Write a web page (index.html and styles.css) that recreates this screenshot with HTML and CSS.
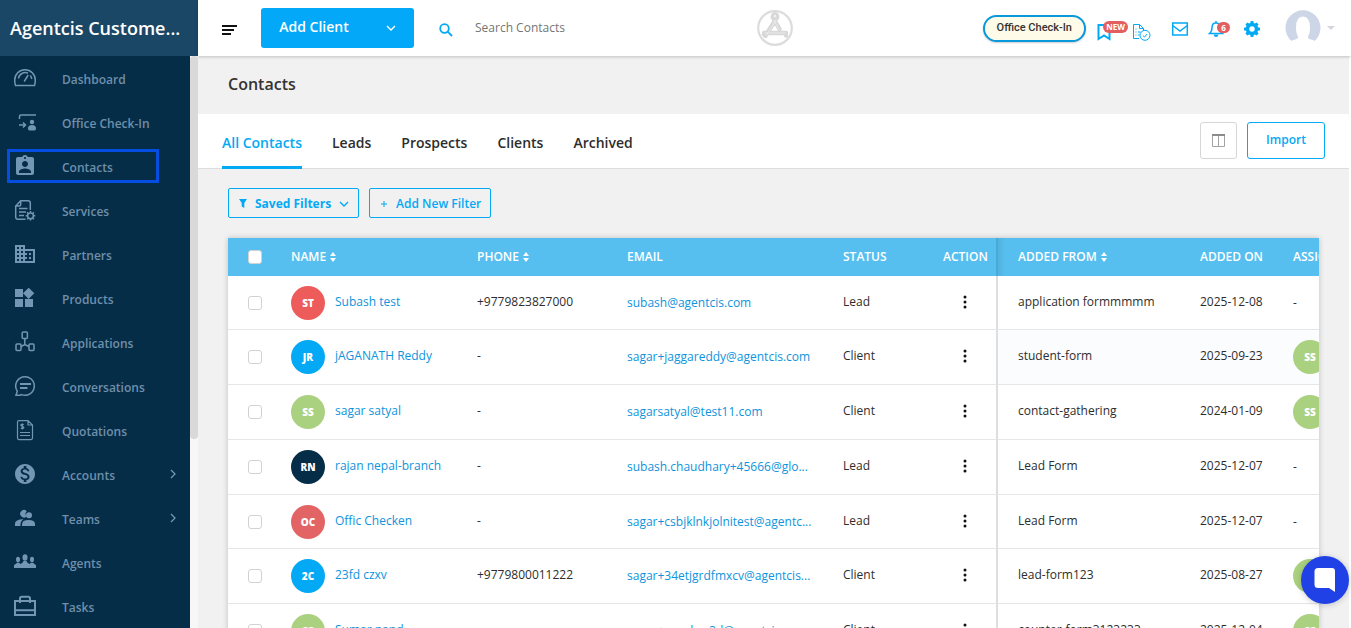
FILE: index.html
```html
<!DOCTYPE html>
<html lang="en">
<head>
<meta charset="utf-8">
<meta name="viewport" content="width=device-width, initial-scale=1">
<title>Contacts</title>
<link rel="stylesheet" href="styles.css">
</head>
<body>
<div class="app">
  <aside class="sidebar">
    <div class="brand">Agentcis Custome...</div>
    <div class="sidebar-body">
      <nav class="nav">
        <a class="nav-link" href="#"><svg class="nav-icon" viewBox="0 0 24 24"><g class="line"><path d="M2.500 19.500Q1.700 17 1.700 14a10.300 10.300 0 0 1 20.600 0q0 3-.8 5.500z"/><path d="M5.500 12.500a6.800 6.800 0 0 1 9.500-5.300M18.700 13a6.500 6.500 0 0 0-1.400-3.600"/><path d="M11.200 15.500l4-6.500"/></g></svg>Dashboard</a>
        <a class="nav-link" href="#"><svg class="nav-icon" viewBox="0 0 24 24"><g class="line"><path d="M6.500 9V6.500q0-1.500 1.500-1.500H23M6 15h6.500M10 12.500l2.500 2.500-2.500 2.500"/></g><circle cx="19" cy="12" r="2.200"/><path d="M15 18.500q0-3.500 4-3.500t4 3.500q0 2-1.500 2h-5q-1.500 0-1.500-2z"/></svg>Office Check-In</a>
        <a class="nav-link current" href="#" aria-current="page"><svg class="nav-icon" viewBox="0 0 24 24"><path d="M19 3h-4.180C14.400 1.840 13.300 1 12 1c-1.300 0-2.400.84-2.820 2H5c-1.100 0-2 .9-2 2v14c0 1.100.9 2 2 2h14c1.100 0 2-.9 2-2V5c0-1.100-.9-2-2-2zm-7 0c.55 0 1 .45 1 1s-.45 1-1 1-1-.45-1-1 .45-1 1-1zm0 4c1.660 0 3 1.340 3 3s-1.340 3-3 3-3-1.340-3-3 1.340-3 3-3zm6 12H6v-1.400c0-2 4-3.100 6-3.100s6 1.100 6 3.100V19z"/></svg>Contacts</a>
        <a class="nav-link" href="#"><svg class="nav-icon" viewBox="0 0 24 24"><g class="line"><path d="M12.500 21.300H5q-2.300 0-2.300-2.300V8l5-5.200H15q2.300 0 2.300 2.300v7M2.700 8h3.500q1.500 0 1.500-1.500V2.800M6 10.500h8.500M6 14h7M6 17.500h5"/><circle cx="17.500" cy="17.800" r="2.900"/></g><path class="teeth" d="M17.500 13v1.500M17.500 21v1.600M12.700 17.800h1.500M20.800 17.800h1.500M14.100 14.400l1 1M19.900 20.200l1 1M14.100 21.200l1-1M19.900 15.400l1-1"/></svg>Services</a>
        <a class="nav-link" href="#"><svg class="nav-icon" viewBox="0 0 24 24"><path d="M12 7V3H2v18h20V7H12zM6 19H4v-2h2v2zm0-4H4v-2h2v2zm0-4H4V9h2v2zm0-4H4V5h2v2zm4 12H8v-2h2v2zm0-4H8v-2h2v2zm0-4H8V9h2v2zm0-4H8V5h2v2zm10 12h-8v-2h2v-2h-2v-2h2v-2h-2V9h8v10zm-2-8h-2v2h2v-2zm0 4h-2v2h2v-2z"/></svg>Partners</a>
        <a class="nav-link" href="#"><svg class="nav-icon" viewBox="0 0 24 24"><path d="M12 13h8v8h-8zM2 13h8v8H2zM2 3h8v8H2zM15.660 1.690L10 7.340 15.660 13l5.660-5.660z"/></svg>Products</a>
        <a class="nav-link" href="#"><svg class="nav-icon" viewBox="0 0 24 24"><g class="line"><rect x="9.200" y="2" width="5.200" height="6.500" rx="1"/><rect x="3" y="14" width="5" height="6.500" rx="1"/><rect x="16" y="14" width="5" height="6.500" rx="1"/><path d="M11.800 8.500v5.500M8 16.500l3.800-2 4.200 2"/></g></svg>Applications</a>
        <a class="nav-link" href="#"><svg class="nav-icon" viewBox="0 0 24 24"><path class="line" d="M3 21.200l1.300-4A9.300 9.300 0 1 1 8.500 20.600L7 21.200z"/><path class="bold" d="M7 10h11M7 14h7.500"/></svg>Conversations</a>
        <a class="nav-link" href="#"><svg class="nav-icon" viewBox="0 0 24 24"><g class="thin"><path d="M15 2.600H6q-1.500 0-1.500 1.500v16q0 1.500 1.500 1.500h12q1.500 0 1.500-1.500V7zM15 2.600V7h4.500M7 14.500h10M7 17.500h10"/><path d="M10.800 6.500q-3-.8-3 .6c0 1.500 3 .9 3 2.400q0 1.400-3 .6M9.300 5.500v6"/></g></svg>Quotations</a>
        <a class="nav-link" href="#"><svg class="nav-icon" viewBox="0 0 24 24"><path d="M12 2C6.480 2 2 6.480 2 12s4.480 10 10 10 10-4.480 10-10S17.520 2 12 2zm1.410 16.090V20h-2.670v-1.930c-1.710-.36-3.160-1.460-3.270-3.400h1.960c.1 1.050.82 1.870 2.650 1.870 1.960 0 2.400-.98 2.400-1.590 0-.83-.44-1.610-2.670-2.140-2.480-.6-4.180-1.620-4.180-3.670 0-1.720 1.390-2.840 3.110-3.210V4h2.670v1.950c1.860.45 2.790 1.860 2.850 3.390H14.300c-.05-1.110-.64-1.870-2.220-1.870-1.500 0-2.400.68-2.400 1.640 0 .84.65 1.390 2.670 1.910s4.180 1.390 4.180 3.910c-.01 1.830-1.380 2.830-3.120 3.160z"/></svg>Accounts<svg class="nav-arrow" viewBox="0 0 6 10"><path d="M1 1l4 4-4 4"/></svg></a>
        <a class="nav-link" href="#"><svg class="nav-icon" viewBox="0 0 24 24"><path d="M13.500 10.500a3.700 3.700 0 1 1 .2-5.200 4 4 0 0 0-.2 5.200zM2 20v-2.500q0-4 8.500-4.200-3.500 2.200-3 6.700z"/><circle cx="16" cy="9.300" r="3"/><path d="M9 20v-1.700q0-4.300 6.500-4.300 6.500 0 6.500 4V20z"/></svg>Teams<svg class="nav-arrow" viewBox="0 0 6 10"><path d="M1 1l4 4-4 4"/></svg></a>
        <a class="nav-link" href="#"><svg class="nav-icon" viewBox="0 0 24 24"><ellipse cx="12" cy="7.500" rx="2.500" ry="3.300"/><ellipse cx="5" cy="9.500" rx="2" ry="2.800"/><ellipse cx="19" cy="9.500" rx="2" ry="2.800"/><path d="M1 18v-3q2.500-1.200 3-2.200h2l1.500 1.200q2.500-1 3-3h3q.5 2 3 3l1.500-1.200h2q.5 1 3 2.200v3z"/></svg>Agents</a>
        <a class="nav-link" href="#"><svg class="nav-icon" viewBox="0 0 24 24"><path class="bold" d="M2 7h20v14H2zM2 16.200h20M7 9V4.500Q7 2.800 8.800 2.800h6.400Q17 2.800 17 4.500V9"/></svg>Tasks</a>
      </nav>
      <div class="track"><div class="thumb"></div></div>
    </div>
  </aside>

  <div class="main">
    <header class="topbar">
      <div class="top-left">
        <button class="icon-button" aria-label="Toggle menu"><svg class="menu-icon" viewBox="0 0 15 12"><path d="M0 2h15M0 6h12M0 10h9"/></svg></button>
        <div class="split">
          <button class="split-main">Add Client</button>
          <button class="split-more" aria-label="More options"><svg class="chevron" viewBox="0 0 10 6"><path d="M1 1l4 4 4-4"/></svg></button>
        </div>
        <label class="search"><svg class="search-icon" viewBox="0 0 14 14"><circle cx="5.500" cy="5.500" r="4.300"/><path d="M8.700 8.700l4.300 4.300"/></svg><input type="text" placeholder="Search Contacts" aria-label="Search Contacts"></label>
      </div>
      <svg class="logo" viewBox="0 0 36 36"><circle cx="18" cy="18" r="16.800" fill="none" stroke="#dcdcdc" stroke-width="2.200"/><g fill="none" stroke="#d8d8d8" stroke-width="4.400" stroke-linecap="round" stroke-linejoin="round"><path d="M7 23h22M19.500 8.500L8.500 25.500M16.500 8.500l6 10.500M18 6.500v.5M28.500 23.500l.5 2M7 24.500l1.500 1.500"/></g><circle cx="18" cy="6.500" r="4.400" fill="#d8d8d8"/><circle cx="18" cy="6" r="1.200" fill="#f4f4f4"/><g fill="none" stroke="#efefef" stroke-width=".8"><path d="M8 23h20.500M19.500 9.500l-10 15.500M16.800 10l5.200 9.500"/></g></svg>
      <div class="top-right">
        <button class="checkin">Office Check-In</button>
        <button class="icon-button bookmark" aria-label="What's new"><svg width="14" height="18" viewBox="0 0 14 18"><path class="accent" d="M1.500 2h11v14L7 12.500 1.500 16z" stroke-width="2"/></svg><span class="badge badge-new">NEW</span></button>
        <button class="icon-button report" aria-label="Tasks due"><svg width="20" height="18" viewBox="0 0 20 18"><g class="accent"><path d="M7 15.500H1.500V1.500h6l4 4V8M7.500 1.500v4h4M3.500 6h1M3.500 9h1M3.500 12h1M6 9h2.500M6 12h1.500"/><circle cx="13" cy="12.300" r="5"/><path d="M10.800 12.500l1.700 1.500 2.600-3"/></g></svg></button>
        <button class="icon-button mail" aria-label="Mail"><svg width="18" height="14" viewBox="0 0 18 14"><path class="accent" d="M1.700 1h14.600v12H1.700zM1.700 3.500L9 9l7.300-5.500" stroke-width="1.500"/></svg></button>
        <button class="icon-button bell" aria-label="Notifications"><svg width="16" height="18" viewBox="0 0 16 18"><path class="accent" d="M1.500 13.500q2.500-2 2.500-6 0-4.500 4-4.500t4 4.500q0 4 2.500 6zM8 1v2" stroke-width="1.500"/><path class="accent-fill" d="M5.500 14.500h5q-.5 2.500-2.500 2.500t-2.500-2.500z"/></svg><span class="badge badge-count">6</span></button>
        <button class="icon-button gear" aria-label="Settings"><svg width="16" height="16" viewBox="0 0 16 16"><path class="accent-fill" fill-rule="evenodd" d="M6.700 0h2.600l.4 2 1.200.5L12.600 1.400l2 2-1.100 1.700.5 1.200 2 .4v2.600l-2 .4-.5 1.200 1.100 1.700-2 2-1.700-1.100-1.200.5-.4 2H6.700l-.4-2-1.200-.5-1.700 1.100-2-2 1.100-1.700L2 9.700l-2-.4V6.700l2-.4.5-1.200L1.400 3.400l2-2 1.700 1.100L6.300 2zM8 5.300a2.700 2.700 0 1 0 0 5.400 2.700 2.700 0 0 0 0-5.400z"/></svg></button>
        <button class="icon-button profile" aria-label="Profile"><svg width="36" height="36" viewBox="0 0 36 36"><path fill="#cdd6e7" d="M6.500 31A17.500 17.500 0 1 1 29.500 31q-1-1-4.500-1.800-3-.7-1.500-3.700 1.500-2.500 1.500-8 0-11-7-11t-7 11q0 5.500 1.500 8 1.500 3-1.500 3.700Q7.500 30 6.500 31z"/></svg><svg width="8" height="4" viewBox="0 0 8 4"><path fill="#d3d6dc" d="M0 0h8L4 4z"/></svg></button>
      </div>
    </header>

    <main class="content">
      <div class="page-title"><h1>Contacts</h1></div>
      <div class="tabbar">
        <nav class="tabs">
          <a class="tab selected" href="#">All Contacts</a>
          <a class="tab" href="#">Leads</a>
          <a class="tab" href="#">Prospects</a>
          <a class="tab" href="#">Clients</a>
          <a class="tab" href="#">Archived</a>
        </nav>
        <div class="tab-actions">
          <button class="columns" aria-label="Choose columns"><svg width="13" height="13" viewBox="0 0 13 13"><path d="M.5 1v11.500h12V1M6.500 1v11.500" fill="none" stroke="#a3a3a3"/><path d="M0 1h13" stroke="#8c8c8c" stroke-width="2"/></svg></button>
          <button class="import">Import</button>
        </div>
      </div>
      <div class="filters">
        <button class="filter strong"><svg width="8" height="9" viewBox="0 0 8 9"><path fill="currentColor" d="M0 0h8L5.300 4v5L2.700 7.500V4z"/></svg>Saved Filters<svg class="chevron" viewBox="0 0 10 6"><path d="M1 1l4 4 4-4"/></svg></button>
        <button class="filter"><svg width="8" height="8" viewBox="0 0 8 8"><path d="M4 1v6M1 4h6" stroke="currentColor" fill="none"/></svg>Add New Filter</button>
      </div>

      <div class="table-card">
        <table>
          <colgroup><col class="c-check"><col class="c-name"><col class="c-phone"><col class="c-email"><col class="c-status"><col class="c-action"><col class="c-from"><col class="c-on"><col class="c-assignee"></colgroup>
          <thead>
            <tr>
              <th><input type="checkbox" aria-label="Select all"></th>
              <th>NAME <svg class="sort" viewBox="0 0 6 10"><path d="M0 4l3-4 3 4zM0 6h6l-3 4z"/></svg></th>
              <th>PHONE <svg class="sort" viewBox="0 0 6 10"><path d="M0 4l3-4 3 4zM0 6h6l-3 4z"/></svg></th>
              <th>EMAIL</th><th>STATUS</th><th class="action">ACTION</th>
              <th class="from">ADDED FROM <svg class="sort" viewBox="0 0 6 10"><path d="M0 4l3-4 3 4zM0 6h6l-3 4z"/></svg></th>
              <th class="on">ADDED ON</th><th class="assignee">ASSIGNEE</th>
            </tr>
          </thead>
          <tbody>
            <tr>
              <td><input type="checkbox" aria-label="Select Subash test"></td>
              <td><div class="person"><span class="avatar red">ST</span><a href="#">Subash test</a></div></td>
              <td>+9779823827000</td><td><a class="email" href="#">subash@agentcis.com</a></td><td>Lead</td>
              <td class="action"><button class="dots" aria-label="Actions"><svg viewBox="0 0 4 14"><circle cx="2" cy="2" r="1.500"/><circle cx="2" cy="7" r="1.500"/><circle cx="2" cy="12" r="1.500"/></svg></button></td>
              <td class="from">application formmmmm</td><td class="on">2025-12-08</td><td class="assignee">-</td>
            </tr>
            <tr class="tinted">
              <td><input type="checkbox" aria-label="Select jAGANATH Reddy"></td>
              <td><div class="person"><span class="avatar blue">JR</span><a href="#">jAGANATH Reddy</a></div></td>
              <td>-</td><td><a class="email" href="#">sagar+jaggareddy@agentcis.com</a></td><td>Client</td>
              <td class="action"><button class="dots" aria-label="Actions"><svg viewBox="0 0 4 14"><circle cx="2" cy="2" r="1.500"/><circle cx="2" cy="7" r="1.500"/><circle cx="2" cy="12" r="1.500"/></svg></button></td>
              <td class="from">student-form</td><td class="on">2025-09-23</td><td class="assignee"><span class="avatar green">SS</span></td>
            </tr>
            <tr>
              <td><input type="checkbox" aria-label="Select sagar satyal"></td>
              <td><div class="person"><span class="avatar green">SS</span><a href="#">sagar satyal</a></div></td>
              <td>-</td><td><a class="email" href="#">sagarsatyal@test11.com</a></td><td>Client</td>
              <td class="action"><button class="dots" aria-label="Actions"><svg viewBox="0 0 4 14"><circle cx="2" cy="2" r="1.500"/><circle cx="2" cy="7" r="1.500"/><circle cx="2" cy="12" r="1.500"/></svg></button></td>
              <td class="from">contact-gathering</td><td class="on">2024-01-09</td><td class="assignee"><span class="avatar green">SS</span></td>
            </tr>
            <tr>
              <td><input type="checkbox" aria-label="Select rajan nepal-branch"></td>
              <td><div class="person"><span class="avatar navy">RN</span><a href="#">rajan nepal-branch</a></div></td>
              <td>-</td><td><a class="email" href="#">subash.chaudhary+45666@glo...</a></td><td>Lead</td>
              <td class="action"><button class="dots" aria-label="Actions"><svg viewBox="0 0 4 14"><circle cx="2" cy="2" r="1.500"/><circle cx="2" cy="7" r="1.500"/><circle cx="2" cy="12" r="1.500"/></svg></button></td>
              <td class="from">Lead Form</td><td class="on">2025-12-07</td><td class="assignee">-</td>
            </tr>
            <tr class="short">
              <td><input type="checkbox" aria-label="Select Offic Checken"></td>
              <td><div class="person"><span class="avatar rose">OC</span><a href="#">Offic Checken</a></div></td>
              <td>-</td><td><a class="email" href="#">sagar+csbjklnkjolnitest@agentc...</a></td><td>Lead</td>
              <td class="action"><button class="dots" aria-label="Actions"><svg viewBox="0 0 4 14"><circle cx="2" cy="2" r="1.500"/><circle cx="2" cy="7" r="1.500"/><circle cx="2" cy="12" r="1.500"/></svg></button></td>
              <td class="from">Lead Form</td><td class="on">2025-12-07</td><td class="assignee">-</td>
            </tr>
            <tr>
              <td><input type="checkbox" aria-label="Select 23fd czxv"></td>
              <td><div class="person"><span class="avatar blue">2C</span><a href="#">23fd czxv</a></div></td>
              <td>+9779800011222</td><td><a class="email" href="#">sagar+34etjgrdfmxcv@agentcis...</a></td><td>Client</td>
              <td class="action"><button class="dots" aria-label="Actions"><svg viewBox="0 0 4 14"><circle cx="2" cy="2" r="1.500"/><circle cx="2" cy="7" r="1.500"/><circle cx="2" cy="12" r="1.500"/></svg></button></td>
              <td class="from">lead-form123</td><td class="on">2025-08-27</td><td class="assignee"><span class="avatar green">SS</span></td>
            </tr>
            <tr>
              <td><input type="checkbox" aria-label="Select Samar nad"></td>
              <td><div class="person"><span class="avatar green">SS</span><a href="#">Sumar nand</a></div></td>
              <td>-</td><td><a class="email" href="#">sagar+number3d@agentcis.com</a></td><td>Client</td>
              <td class="action"><button class="dots" aria-label="Actions"><svg viewBox="0 0 4 14"><circle cx="2" cy="2" r="1.500"/><circle cx="2" cy="7" r="1.500"/><circle cx="2" cy="12" r="1.500"/></svg></button></td>
              <td class="from">counter-form3123233</td><td class="on">2025-12-04</td><td class="assignee"><span class="avatar green">SS</span></td>
            </tr>
          </tbody>
        </table>
      </div>
    </main>
  </div>
  <button class="chat" aria-label="Open chat"><svg width="22" height="24" viewBox="0 0 22 24"><path fill="#fff" d="M4 0h14q3 0 3 3v21l-6-4H4q-3.500 0-3.500-3.500v-13Q.5 0 4 0z"/></svg></button>
</div>
</body>
</html>
```
FILE: styles.css
```css
* { box-sizing: border-box; }
body { margin: 0; background: #fff; color: #2d2d2d; font-family: "Open Sans", "Noto Sans", sans-serif; font-size: 12px; line-height: 18px; }
button, input { font: inherit; }
button { padding: 0; border: 0; background: none; color: inherit; cursor: pointer; }
a { color: #0d94dc; text-decoration: none; }
svg { display: block; flex: none; }

.app { display: grid; grid-template-columns: 198px 1fr; height: 100vh; overflow: hidden; }

/* Sidebar */
.sidebar { display: flex; flex-direction: column; min-height: 0; background: #052d47; }
.brand { flex: none; height: 56px; padding: 0 10px; background: #1b4766; color: #fff; font-size: 18px; font-weight: 600; line-height: 56px; white-space: nowrap; }
.sidebar-body { display: grid; grid-template-columns: 1fr 8px; flex: 1; min-height: 0; }
.nav { overflow: hidden; min-height: 0; }
.nav-link { position: relative; display: flex; align-items: center; gap: 25px; height: 44px; padding: 4px 14px 0 13px; color: #6f8fab; font-weight: 600; }
.nav-icon { width: 24px; height: 24px; margin-bottom: 4px; fill: #7396b4; }
.nav-icon .line, .nav-icon .bold, .nav-icon .thin, .nav-icon .teeth { fill: none; stroke: #7396b4; stroke-width: 1.5; }
.nav-icon .bold { stroke-width: 2; }
.nav-icon .thin { stroke-width: 1.2; }
.nav-arrow { width: 6px; height: 10px; margin-left: auto; margin-bottom: 4px; fill: none; stroke: #7396b4; stroke-width: 1.3; }
.current::after { content: ""; position: absolute; inset: 5px 31px 5px 7px; border: 3px solid #064ee2; }
.track { background: #f7f7f7; }
.thumb { height: 67%; border-radius: 4px; background: #d9d9d9; }

/* Top bar */
.main { display: flex; flex-direction: column; min-width: 0; min-height: 0; }
.topbar { position: relative; display: grid; grid-template-columns: 1fr auto 1fr; align-items: center; flex: none; height: 56px; padding: 0 16px 0 24px; background: #fff; box-shadow: 0 1px 3px rgba(0, 0, 0, .2); }
.top-left { display: flex; align-items: center; margin-right: -8px; }
.icon-button { display: flex; align-items: center; position: relative; }
.menu-icon { width: 15px; height: 12px; margin-top: 4px; fill: none; stroke: #111; stroke-width: 2; }
.split { display: flex; width: 153px; height: 40px; margin-left: 24px; border-radius: 3px; background: #03a9f8; color: #fff; }
.split-main { width: 106px; padding-bottom: 2px; font-size: 14px; font-weight: 600; }
.split-more { display: flex; flex: 1; align-items: center; justify-content: center; }
.chevron { width: 10px; height: 6px; fill: none; stroke: currentColor; stroke-width: 1.4; }
.search { display: flex; align-items: center; flex: 1; gap: 22px; margin-left: 25px; }
.search-icon { width: 14px; height: 14px; margin-top: 4px; fill: none; stroke: #03a9f4; stroke-width: 1.8; }
.search input { flex: 1; min-width: 0; padding: 0; border: 0; outline: 0; background: none; color: #333; }
.search input::placeholder { color: #757575; opacity: 1; }
.logo { width: 36px; height: 36px; margin-right: 8px; }
.top-right { display: flex; align-items: center; justify-content: flex-end; }
.checkin { height: 27px; padding: 0 12px; border: 2px solid #0899dc; border-radius: 14px; background: #fffbe9; color: #333; font-family: Roboto, Inter, sans-serif; font-size: 11px; font-weight: 500; box-shadow: 0 1px 2px rgba(0, 0, 0, .2); }
.accent { fill: none; stroke: #03a9f4; }
.accent-fill { fill: #03a9f4; }
.bookmark { margin: 8px 0 0 11px; }
.badge { position: absolute; border-radius: 7px; background: #e35f5f; color: #fff; font-size: 8px; font-weight: 700; line-height: 12px; text-align: center; }
.badge-new { left: 6px; top: -2px; width: 25px; }
.badge-count { left: 9px; top: 2px; width: 13px; line-height: 11px; }
.report { margin: 8px 0 0 21px; }
.mail { margin: 2px 0 0 19px; }
.bell { margin: 2px 0 0 19px; }
.gear { margin: 2px 0 0 20px; }
.profile { gap: 6px; margin-left: 25px; }

/* Page */
.content { flex: 1; min-height: 0; margin-right: 2px; overflow: hidden; background: #f1f1f1; }
.page-title { padding: 15px 30px 17px; }
h1 { margin: 0; font-size: 16px; font-weight: 600; line-height: 26px; color: #333; }
.tabbar { display: flex; justify-content: space-between; height: 55px; padding: 0 24px; border-bottom: 1px solid #dedede; background: #fff; }
.tabs { display: flex; gap: 30px; }
.tab { height: 55px; color: #2d2d2d; font-size: 14px; font-weight: 600; line-height: 58px; }
.selected { border-bottom: 3px solid #03a9f4; color: #03a9f4; }
.tab-actions { display: flex; align-items: center; gap: 10px; padding-bottom: 2px; }
.columns { display: flex; align-items: center; justify-content: center; width: 37px; height: 37px; border: 1px solid #d6d6d6; border-radius: 3px; }
.import { width: 78px; height: 37px; border: 1px solid #03a9f4; border-radius: 3px; color: #03a9f4; font-weight: 600; }
.filters { display: flex; gap: 10px; padding: 19px 30px 20px; }
.filter { display: flex; align-items: center; gap: 8px; height: 30px; padding: 1px 9px 0 10px; border: 1px solid #03a9f4; border-radius: 2px; color: #03a9f4; font-weight: 600; }
.strong { font-weight: 700; }

/* Table */
.table-card { margin: 0 30px; overflow: hidden; background: #fff; box-shadow: 0 0 6px rgba(0, 0, 0, .2); }
table { width: 1144px; border-collapse: separate; border-spacing: 0; table-layout: fixed; }
.c-check { width: 48px; }
.c-name { width: 186px; }
.c-phone { width: 150px; }
.c-email { width: 216px; }
.c-status { width: 100px; }
.c-action { width: 70px; }
.c-from { width: 182px; }
.c-on { width: 93px; }
th { height: 38px; padding: 0 0 0 15px; background: #57bfef; color: #fff; font-weight: 600; text-align: left; white-space: nowrap; }
td { height: 55px; padding: 0 0 2px 15px; border-top: 1px solid #e6e6e6; white-space: nowrap; }
tbody tr:first-child td { height: 53px; border-top: 0; }
tbody .short td { height: 54px; }
th:first-child, td:first-child { padding: 0 0 0 20px; }
td:nth-child(2) { padding-bottom: 0; }
.from, th.from { padding-left: 20px; }
.on, .assignee, th.on, th.assignee { padding-left: 20px; }
.action { border-right: 2px solid #dcdee0; }
th.action { border-right-color: #4aa9d6; }
th.from { background: linear-gradient(90deg, #50b3e1, #57bfef 8px); }
.tinted .from, .tinted .on, .tinted .assignee { background: #fbfcfe; }
.sort { display: inline-block; width: 6px; height: 10px; margin-left: 1px; fill: #fff; vertical-align: -1px; }
input[type="checkbox"] { display: block; width: 14px; height: 14px; margin: 0; border: 1px solid #d2d2d2; border-radius: 3px; background: #fff; appearance: none; }
.person { display: flex; align-items: center; gap: 10px; }
.person a { padding-bottom: 2px; }
.avatar { display: grid; place-items: center; width: 34px; height: 34px; border-radius: 50%; color: #fff; font-size: 10px; font-weight: 800; line-height: 14px; }
.red { background: #ed5b5b; }
.rose { background: #e36464; }
.blue { background: #03a9f4; }
.green { background: #aad17f; }
.navy { background: #052d47; }
.email { display: block; padding-top: 2px; }
.dots { display: block; margin-left: 20px; }
.dots svg { width: 4px; height: 14px; fill: #111; }
td.assignee { padding-bottom: 0; }

.chat { position: fixed; right: 2px; bottom: 24px; display: grid; place-items: center; width: 48px; height: 48px; border-radius: 50%; background: #2041e6; box-shadow: 0 1px 6px rgba(0, 0, 0, .2); }
```
